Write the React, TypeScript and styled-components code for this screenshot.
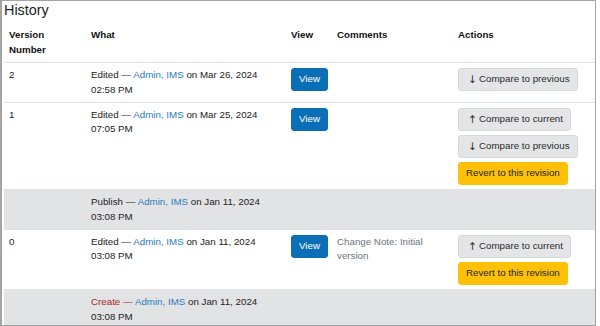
import React from "react";
import styled, { createGlobalStyle } from "styled-components";

const GlobalStyle = createGlobalStyle`
  html, body {
    margin: 0;
    padding: 0;
    background: #fff;
  }
  body {
    font-family: "Liberation Sans", Arial, sans-serif;
    color: #222;
  }
`;

const Frame = styled.div`
  box-sizing: border-box;
  width: 596px;
  height: 326px;
  overflow: hidden;
  border: 1px solid #a4a4a4;
  border-left-width: 2px;
  padding-left: 2px;
`;

const Title = styled.h2`
  margin: 1px 0 4px;
  font-size: 14.4px;
  line-height: 17px;
  font-weight: 400;
  color: #222;
`;

const Table = styled.table`
  width: 100%;
  table-layout: fixed;
  border-collapse: collapse;
  font-size: 9.75px;
  line-height: 14.5px;
`;

const Th = styled.th`
  text-align: left;
  vertical-align: top;
  padding: 5px;
  font-weight: 700;
  color: #111;
  border-bottom: 1px solid #dee2e6;
`;

const Row = styled.tr<{ $muted?: boolean }>`
  background: ${(p) => (p.$muted ? "#e2e3e5" : "#fff")};
`;

const Td = styled.td`
  vertical-align: top;
  padding: 5px 5px 4.5px;
  border-top: 1px solid #dee2e6;
`;

const UserLink = styled.a`
  color: #2a7dbf;
  text-decoration: none;
`;

const Event = styled.span<{ $create?: boolean }>`
  color: ${(p) => (p.$create ? "#a8242c" : "inherit")};
`;

const Note = styled.span`
  color: #6c757d;
`;

const Actions = styled.div`
  display: flex;
  flex-direction: column;
  align-items: flex-start;
  gap: 4px;
`;

const Button = styled.button<{ $variant: "primary" | "light" | "warning" }>`
  display: inline-block;
  box-sizing: border-box;
  font-family: inherit;
  font-size: 9.75px;
  line-height: 14.5px;
  height: 23px;
  padding: 0 7px;
  border-radius: 3px;
  white-space: nowrap;
  cursor: pointer;
  border: 1px solid
    ${(p) =>
      p.$variant === "primary"
        ? "#0b6db4"
        : p.$variant === "warning"
        ? "#ffc107"
        : "#d7d8da"};
  background: ${(p) =>
    p.$variant === "primary"
      ? "#0b6fb7"
      : p.$variant === "warning"
      ? "#ffc107"
      : "#e4e5e7"};
  color: ${(p) =>
    p.$variant === "primary" ? "#fff" : p.$variant === "warning" ? "#222" : "#2b2b2b"};
`;

const Arrow = styled.span`
  display: inline-block;
  width: 13px;
  font-family: "DejaVu Sans", sans-serif;
  font-size: 10.5px;
  line-height: 14px;
  vertical-align: top;
`;

type Revision = {
  version?: string;
  event: string;
  create?: boolean;
  date: string;
  time: string;
  muted?: boolean;
  note?: string;
  view?: boolean;
  actions?: ("current" | "previous" | "revert")[];
};

const revisions: Revision[] = [
  { version: "2", event: "Edited", date: "Mar 26, 2024", time: "02:58 PM", view: true, actions: ["previous"] },
  { version: "1", event: "Edited", date: "Mar 25, 2024", time: "07:05 PM", view: true, actions: ["current", "previous", "revert"] },
  { event: "Publish", date: "Jan 11, 2024", time: "03:08 PM", muted: true },
  { version: "0", event: "Edited", date: "Jan 11, 2024", time: "03:08 PM", view: true, note: "Change Note: Initial version", actions: ["current", "revert"] },
  { event: "Create", create: true, date: "Jan 11, 2024", time: "03:08 PM", muted: true },
];

function ActionButton({ kind }: { kind: "current" | "previous" | "revert" }) {
  if (kind === "revert") return <Button $variant="warning">Revert to this revision</Button>;
  return (
    <Button $variant="light">
      <Arrow>{kind === "current" ? "↑" : "↓"}</Arrow>
      {kind === "current" ? "Compare to current" : "Compare to previous"}
    </Button>
  );
}

export default function App() {
  return (
    <Frame>
      <GlobalStyle />
      <Title>History</Title>
      <Table>
        <colgroup>
          <col style={{ width: 82 }} />
          <col style={{ width: 200 }} />
          <col style={{ width: 46 }} />
          <col style={{ width: 121 }} />
          <col />
        </colgroup>
        <thead>
          <tr>
            <Th>Version Number</Th>
            <Th>What</Th>
            <Th>View</Th>
            <Th>Comments</Th>
            <Th>Actions</Th>
          </tr>
        </thead>
        <tbody>
          {revisions.map((r, i) => (
            <Row key={i} $muted={r.muted}>
              <Td>{r.version}</Td>
              <Td>
                <Event $create={r.create}>{r.event} —</Event>{" "}
                <UserLink href="#">Admin, IMS</UserLink> on {r.date} {r.time}
              </Td>
              <Td>{r.view && <Button $variant="primary">View</Button>}</Td>
              <Td>{r.note && <Note>{r.note}</Note>}</Td>
              <Td>
                {r.actions && (
                  <Actions>
                    {r.actions.map((a) => (
                      <ActionButton key={a} kind={a} />
                    ))}
                  </Actions>
                )}
              </Td>
            </Row>
          ))}
        </tbody>
      </Table>
    </Frame>
  );
}
